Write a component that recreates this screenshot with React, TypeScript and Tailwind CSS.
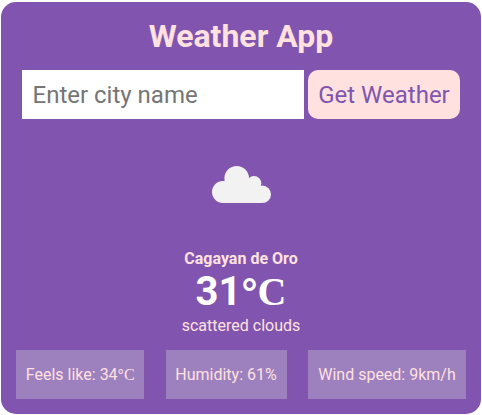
import React from "react";

function Celsius({ className = "" }: { className?: string }) {
  return (
    <span className={`inline-block font-['Liberation_Serif',serif] leading-none ${className}`}>
      <span className="inline-block translate-y-[0.05em] font-['Liberation_Sans',sans-serif] leading-none">°</span>C
    </span>
  );
}

function Stat({ children, className }: { children: React.ReactNode; className: string }) {
  return (
    <div className={`flex h-[49px] items-center justify-center whitespace-nowrap bg-[#9d80be] ${className}`}>
      <span>{children}</span>
    </div>
  );
}

function CloudIcon() {
  return (
    <svg width="60" height="38" viewBox="0 0 60 38" fill="#f2f2f2" aria-hidden="true">
      <circle cx="11" cy="26" r="11" />
      <circle cx="24.7" cy="12.3" r="12.3" />
      <circle cx="42" cy="17.3" r="7.3" />
      <circle cx="50.3" cy="28.3" r="8.7" />
      <path d="M11 15.1H36L49 20V37H11Z" />
    </svg>
  );
}

export default function App() {
  return (
    <main className="h-[415px] w-[482px] bg-white px-px pt-[2px] font-[Roboto,sans-serif] text-base text-[#ffe1e0]">
      <section className="flex h-[412px] flex-col items-center rounded-[15px] bg-[#8155af]">
        <h1 className="mt-[15px] h-[38px] text-[32px] font-bold leading-[38px]">Weather App</h1>
        <form className="mt-[15px] flex h-[49px] gap-1" onSubmit={(e) => e.preventDefault()}>
          <input
            className="w-[282px] bg-white px-[10.5px] text-2xl text-black outline-none placeholder:text-[#757575]"
            placeholder="Enter city name"
          />
          <button className="w-[152px] whitespace-nowrap rounded-[10px] bg-[#ffe1e0] text-2xl text-[#8155af]">
            Get Weather
          </button>
        </form>
        <div className="ml-[2px] mt-[47px] flex h-[38px] w-[60px]">
          <CloudIcon />
        </div>
        <div className="mt-[45px] text-center">
          <p className="h-[19px] font-bold leading-[19px]">Cagayan de Oro</p>
          <p className="h-[48px] whitespace-nowrap text-[40px] font-bold leading-[48px] text-white">
            31<Celsius />
          </p>
          <p className="h-[19px] leading-[19px]">scattered clouds</p>
        </div>
        <div className="mt-[15px] flex w-[450px] justify-between">
          <Stat className="w-[128px]">Feels like: 34<Celsius className="-mr-[0.5px]" /></Stat>
          <Stat className="w-[121px]">Humidity: 61%</Stat>
          <Stat className="w-[158px]">Wind speed: 9km/h</Stat>
        </div>
      </section>
    </main>
  );
}
